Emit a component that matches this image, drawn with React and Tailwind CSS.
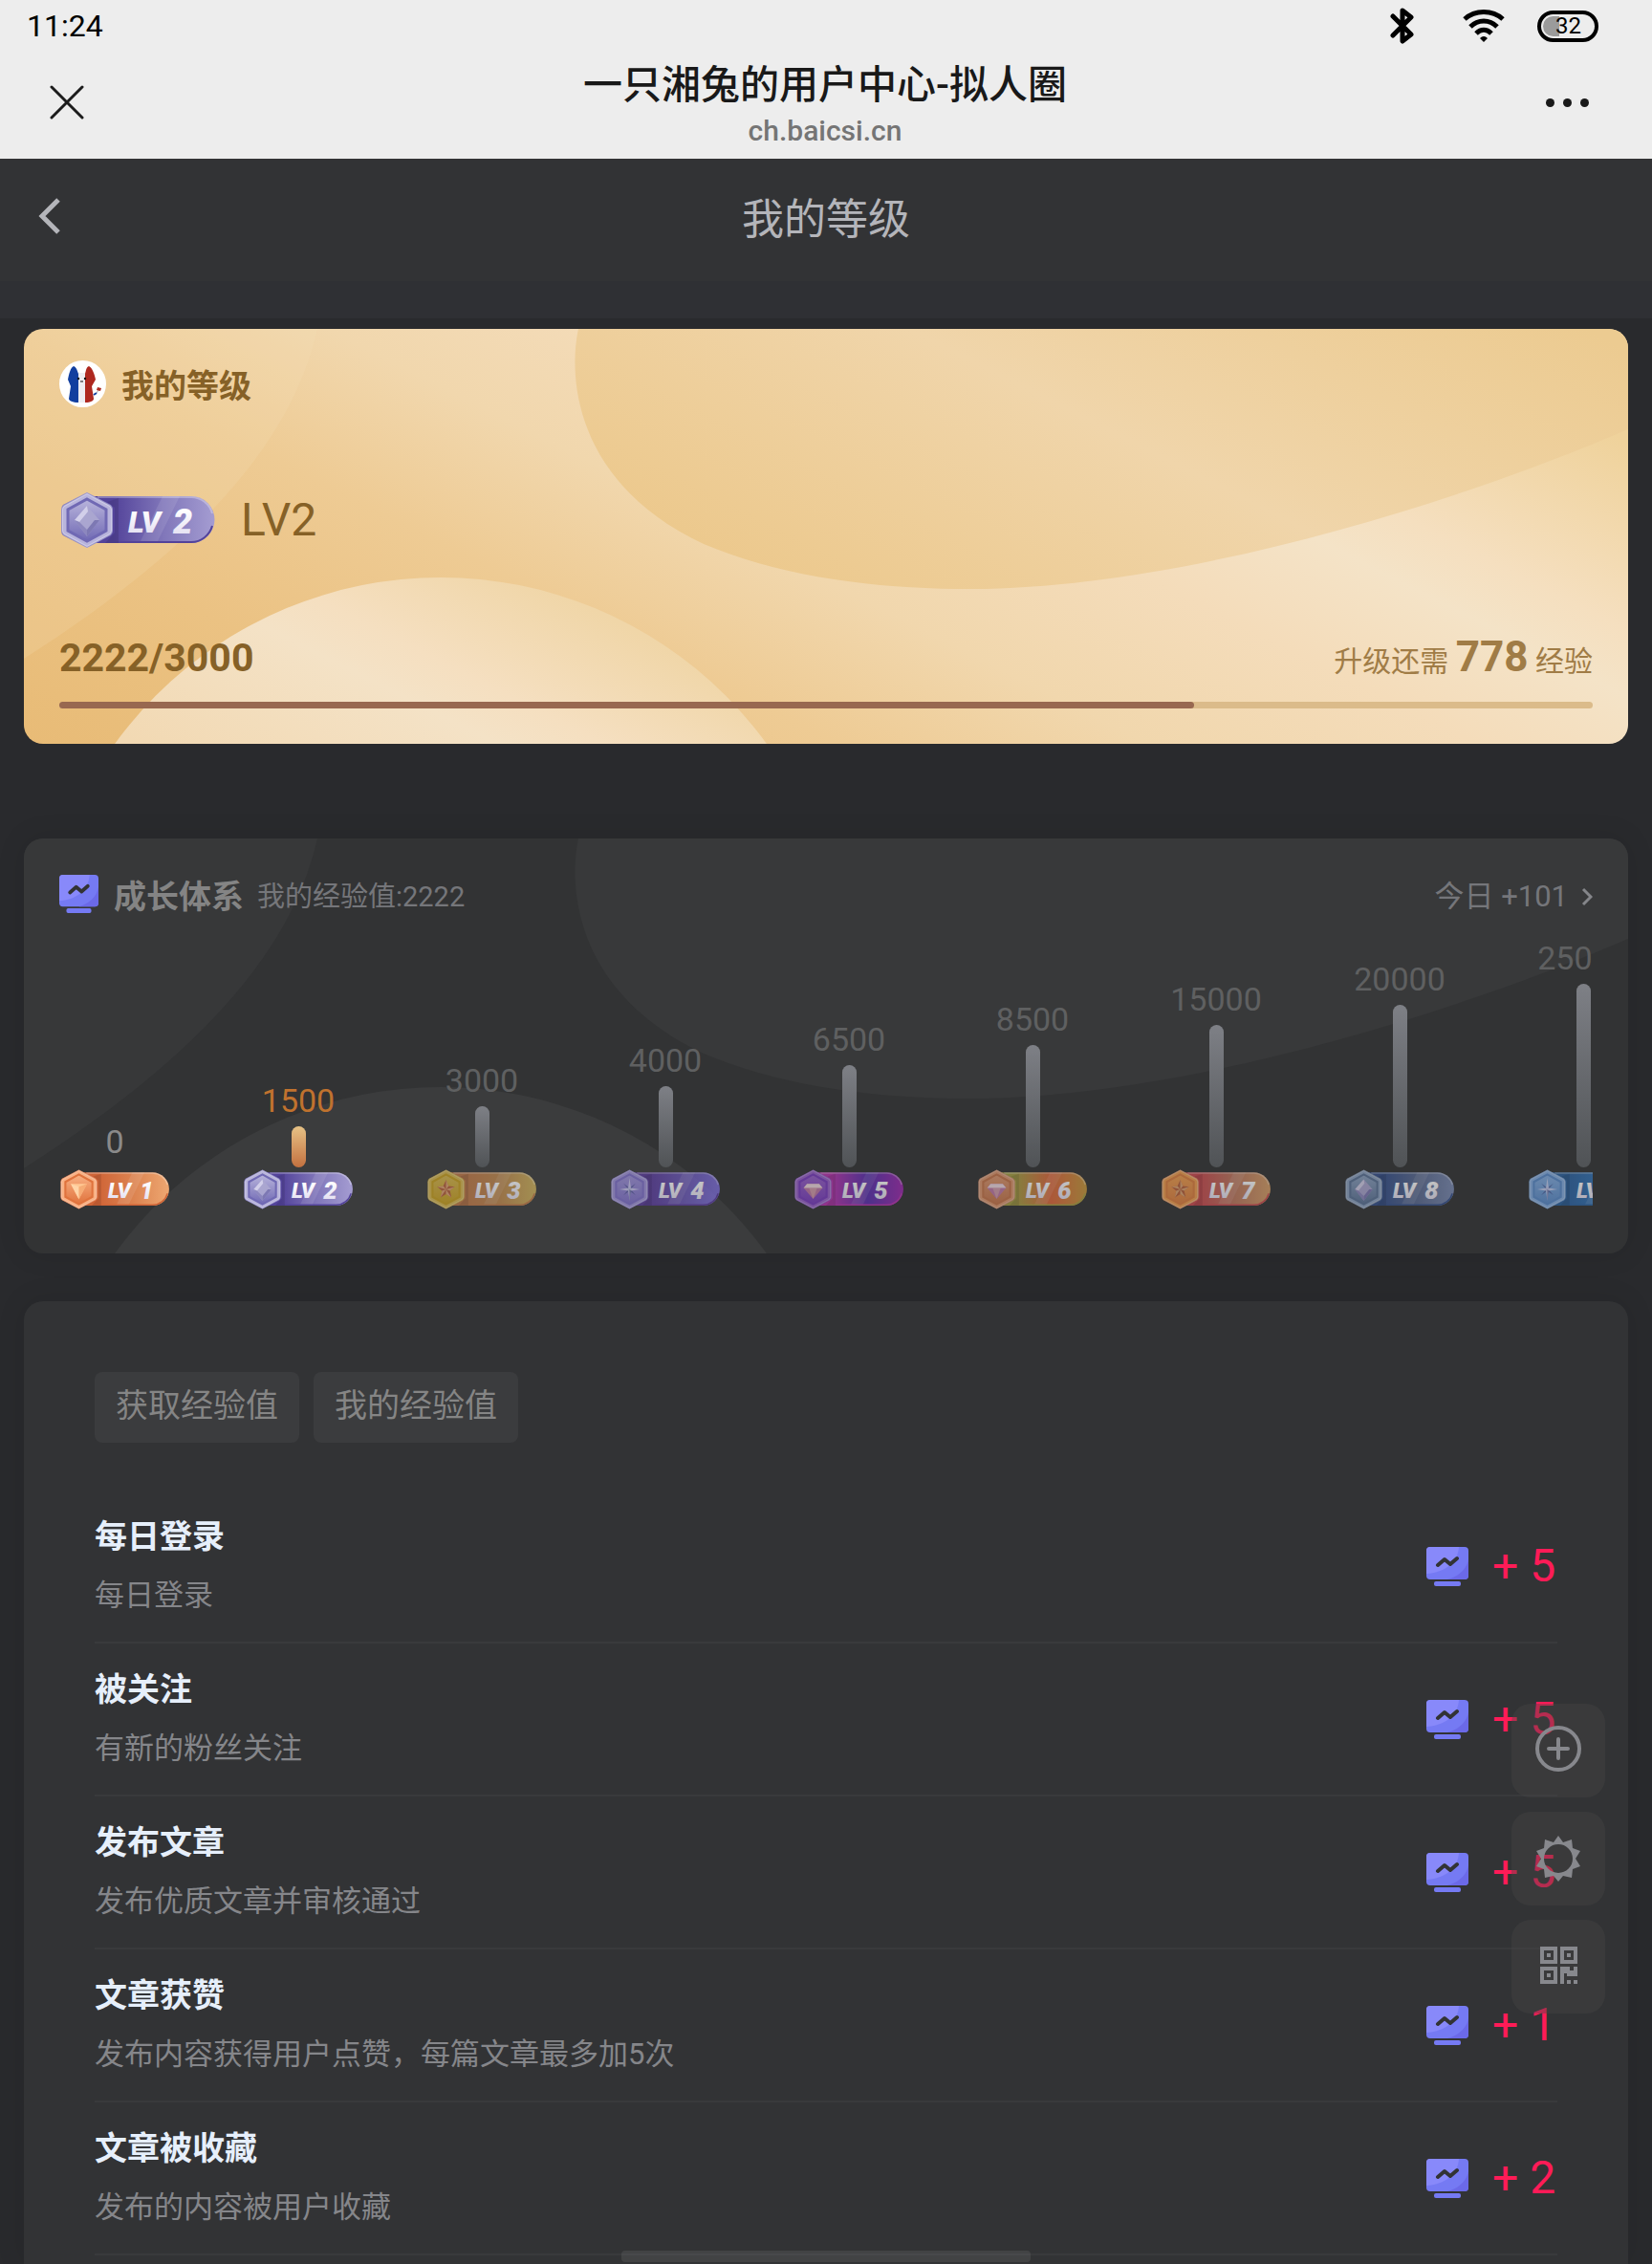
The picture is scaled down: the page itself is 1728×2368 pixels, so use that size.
import { useId } from 'react';
import clsx from 'clsx';

const levels = [
  { lv: 1, exp: '0', bar: 0, mark: 'triangle', hex: ['#f9b184', '#e0733d'], pill: ['#cf6437', '#dc8350', '#eea872'] },
  { lv: 2, exp: '1500', bar: 43, mark: 'diamond', hex: ['#b9b5dc', '#7069b4'], pill: ['#53439a', '#8177ba', '#a59dd2'] },
  { lv: 3, exp: '3000', bar: 64, mark: 'star', hex: ['#d8b850', '#c9a01f'], pill: ['#c07848', '#c08a4e', '#d0b45c'] },
  { lv: 4, exp: '4000', bar: 85, mark: 'compass', hex: ['#a094dc', '#7f70cc'], pill: ['#5a3b9c', '#6b58b8', '#7f70dc'] },
  { lv: 5, exp: '6500', bar: 107, mark: 'gem', hex: ['#9a62cc', '#7a3cc0'], pill: ['#b835b0', '#5a30b0', '#a02ab0'] },
  { lv: 6, exp: '8500', bar: 128, mark: 'gem', hex: ['#e09a72', '#c8764c'], pill: ['#a8a044', '#e0683c', '#c89a3c'] },
  { lv: 7, exp: '15000', bar: 149, mark: 'star', hex: ['#f2a050', '#e08040'], pill: ['#cc4a50', '#c07a60', '#d8a068'] },
  { lv: 8, exp: '20000', bar: 170, mark: 'diamond', hex: ['#8ea4c4', '#5c7498'], pill: ['#35508c', '#5c6c94', '#7c8cb4'] },
  { lv: 9, exp: '25000', bar: 192, mark: 'compass', hex: ['#86b0e4', '#5a8ccc'], pill: ['#2c62a0', '#3478bc', '#60a0dc'] },
];

const currentLevel = 2;

const tasks = [
  { title: '每日登录', desc: '每日登录', exp: 5 },
  { title: '被关注', desc: '有新的粉丝关注', exp: 5 },
  { title: '发布文章', desc: '发布优质文章并审核通过', exp: 5 },
  { title: '文章获赞', desc: '发布内容获得用户点赞，每篇文章最多加5次', exp: 1 },
  { title: '文章被收藏', desc: '发布的内容被用户收藏', exp: 2 },
];

function BadgeMark({ type }) {
  if (type === 'triangle') {
    return (
      <>
        <path d="M17 23H41L29 46Z" fill="#ffc894" />
        <path d="M17 23L29 27V46Z" fill="#ffdcb4" opacity=".6" />
        <path d="M41 23L29 27V46Z" fill="#f09a60" opacity=".6" />
      </>
    );
  }
  if (type === 'star') {
    return (
      <>
        <path d="M29 17L33 26L42 27L35 33L37 43L29 38L21 43L23 33L16 27L25 26Z" fill="#b8603c" />
        <path d="M29 17L33 26L29 31ZM42 27L35 33L29 31ZM37 43L29 38V31ZM21 43L23 33L29 31ZM16 27L25 26L29 31Z" fill="#f0c088" opacity=".7" />
      </>
    );
  }
  if (type === 'compass') {
    return (
      <>
        <path d="M20 22L29 29L38 22L31 31L38 40L29 33L20 40L27 31Z" fill="#3c4888" opacity=".6" />
        <path d="M29 14L31 29L44 31L31 33L29 48L27 33L14 31L27 29Z" fill="#dcdcf8" opacity=".75" />
        <path d="M29 31L31 33L29 48Z" fill="#3c4888" opacity=".7" />
      </>
    );
  }
  if (type === 'gem') {
    return (
      <>
        <path d="M20 23H38L43 29L29 45L15 29Z" fill="#c07aa8" />
        <path d="M20 23H38L43 29H15Z" fill="#f0d8e0" />
        <path d="M23 29H35L29 45Z" fill="#e8bcb0" opacity=".5" />
      </>
    );
  }
  return (
    <>
      <path d="M29 16L42 31L29 48L16 31Z" fill="#aaa6d0" />
      <path d="M29 16L16 31L21 33L30 22Z" fill="#dcdaf0" opacity=".8" />
      <path d="M42 31L29 48V41L37 31Z" fill="#6a65a6" opacity=".7" />
      <path d="M16 31L29 48V41L21 33Z" fill="#7f7ab6" opacity=".7" />
    </>
  );
}

function LevelBadge({ level, className }) {
  const id = useId();
  const { lv, mark, hex, pill } = level;
  return (
    <svg viewBox="0 0 164 62" className={className} role="img" aria-label={`LV ${lv}`}>
      <defs>
        <linearGradient id={`${id}p`} x1="30" x2="163" gradientUnits="userSpaceOnUse">
          <stop offset=".2" stopColor={pill[0]} />
          <stop offset=".6" stopColor={pill[1]} />
          <stop offset="1" stopColor={pill[2]} />
        </linearGradient>
        <linearGradient id={`${id}h`} x1="0" y1="0" x2="0" y2="1">
          <stop offset="0" stopColor={hex[0]} />
          <stop offset="1" stopColor={hex[1]} />
        </linearGradient>
        <linearGradient id={`${id}t`} x1="0" y1="0" x2="0" y2="1">
          <stop offset=".2" stopColor="#ffffff" />
          <stop offset="1" stopColor="#ddd8ee" />
        </linearGradient>
      </defs>
      <path d="M30 6H138A24 24 0 0 1 138 55H30Z" fill={`url(#${id}p)`} />
      <path d="M84 55L108 6H126L102 55Z" fill="#fff" opacity=".1" />
      <path d="M40 7H138A23 23 0 0 1 160 24" fill="none" stroke="#fff" strokeWidth="2" opacity=".3" />
      <path d="M40 54H138A23 23 0 0 0 160 37" fill="none" stroke={pill[0]} strokeWidth="2" />
      <path d="M50 12L58 18V44L48 55H62V8Z" fill="#000" opacity=".1" />
      <path d="M29 2L54 15Q56 17 56 20V42Q56 45 54 47L29 60L4 47Q2 45 2 42V20Q2 17 4 15Z" fill={hex[1]} />
      <path d="M29 3L53 16Q55 18 55 20V42Q55 44 53 46L29 59L5 46Q3 44 3 42V20Q3 18 5 16Z" fill={hex[0]} stroke="#fff" strokeOpacity=".3" strokeWidth="2" />
      <path d="M29 9L49 20V42L29 53L9 42V20Z" fill={`url(#${id}h)`} stroke={hex[1]} strokeWidth="3" />
      <BadgeMark type={mark} />
      <text x="72" y="44" fontSize="32" fontWeight="900" fontStyle="italic" fill={`url(#${id}t)`}>LV</text>
      <text x="119" y="45" fontSize="36" fontWeight="900" fontStyle="italic" fill={`url(#${id}t)`}>{lv}</text>
    </svg>
  );
}

function ExpIcon({ className }) {
  return (
    <svg viewBox="0 0 44 41" className={className} preserveAspectRatio="none" aria-hidden="true">
      <rect width="44" height="34" rx="4" fill="#757af3" />
      <path d="M4 0H34C33 17 18 27 0 28V4Q0 0 4 0Z" fill="#8889fa" />
      <path d="M44 13V30Q44 34 40 34H22C33 31 42 24 44 13Z" fill="#6b69e8" />
      <path d="M12 19L19 13L25 18L32 12" fill="none" stroke="#323335" strokeWidth="4" strokeLinecap="round" strokeLinejoin="round" />
      <rect x="8" y="36" width="28" height="5" rx="2" fill="#757af3" />
    </svg>
  );
}

function Avatar() {
  return (
    <svg viewBox="0 0 49 49" className="size-[49px]" role="img" aria-label="头像">
      <circle cx="24.5" cy="24.5" r="24.5" fill="#fff" />
      <path d="M20 44C14 44 10 42 10 40L12 27L9 20C10 14 12 7 15 6C18 7 19 11 20 14Z" fill="#123f9f" />
      <path d="M20 13H27V44H20Z" fill="#eeeef2" />
      <path d="M27 44C33 44 36 42 36 40L34 27L38 20C37 14 34 7 31 6C28 7 28 11 27 14Z" fill="#ae281f" />
      <path d="M36 36L39 34" stroke="#123f9f" strokeWidth="2" />
      <path d="M39 34L41 31" stroke="#aaa" strokeWidth="1" />
      <path d="M39 31L40 28L44 29L43 32Z" fill="#ae281f" />
      <circle cx="20" cy="19" r="1.2" fill="#111" />
      <circle cx="27" cy="19" r="1.2" fill="#111" />
      <path d="M22 22H25" stroke="#111" strokeWidth="1" />
    </svg>
  );
}

function Waves({ gold }) {
  return (
    <svg viewBox="0 0 1678 434" preserveAspectRatio="none" className="absolute inset-0 h-full w-full" aria-hidden="true">
      {gold && (
        <>
          <defs>
            <linearGradient id="base" gradientUnits="userSpaceOnUse" x1="0" y1="434" x2="469" y2="-494">
              <stop offset="0" stopColor="#e8bb76" />
              <stop offset=".2" stopColor="#ebc283" />
              <stop offset=".37" stopColor="#eecb94" />
              <stop offset=".51" stopColor="#f1d7ad" />
              <stop offset=".66" stopColor="#f4dcba" />
              <stop offset=".77" stopColor="#f4e3c7" />
              <stop offset=".83" stopColor="#f5dfbf" />
              <stop offset="1" stopColor="#efd29b" />
            </linearGradient>
            <linearGradient id="blob" gradientUnits="userSpaceOnUse" x1="219" y1="1" x2="508" y2="-570">
              <stop offset="0" stopColor="#ecc88b" />
              <stop offset=".5" stopColor="#f0d5aa" />
              <stop offset="1" stopColor="#eccb91" />
            </linearGradient>
            <linearGradient id="hill" gradientUnits="userSpaceOnUse" x1="0" y1="374" x2="153" y2="71">
              <stop offset="0" stopColor="#f2d9b3" />
              <stop offset=".5" stopColor="#f4e2c6" />
              <stop offset=".65" stopColor="#f5dfc0" />
              <stop offset="1" stopColor="#f0d6a8" />
            </linearGradient>
          </defs>
          <rect width="1678" height="434" fill="url(#base)" />
        </>
      )}
      <path d="M0 0H307C280 120 180 230 0 345Z" fill={gold ? '#f4e0b8' : '#373839'} opacity={gold ? 0.2 : 1} />
      <path d="M580 0C570 45 572 160 711 225C800 262 900 272 989 272C1200 272 1480 190 1678 105V0Z" fill={gold ? 'url(#blob)' : '#38393a'} />
      <circle cx="436" cy="681" r="421" fill={gold ? 'url(#hill)' : '#3b3c3d'} />
    </svg>
  );
}

function BrowserBar() {
  return (
    <header className="bg-[#ededed] text-black">
      <div className="flex h-[54px] items-center justify-between pr-14 pl-7">
        <span className="text-[32px] leading-10">11:24</span>
        <div className="flex items-center">
          <svg viewBox="0 0 26 40" className="mr-[50px] h-10 w-[26px]" fill="none" stroke="#000" strokeWidth="5" strokeLinejoin="round" strokeLinecap="round" aria-hidden="true">
            <path d="M3 10L22 29L13 36V4L22 11L3 30" />
          </svg>
          <svg viewBox="0 0 44 34" className="mr-[34px] h-[34px] w-11" fill="none" stroke="#000" strokeWidth="5" aria-hidden="true">
            <path d="M2 10C13 0 31 0 42 10" />
            <path d="M8 18C16 10 28 10 36 18" />
            <path d="M14 25C19 20 25 20 30 25" />
            <path d="M18 30Q22 26 26 30L22 34Z" fill="#000" stroke="none" />
          </svg>
          <div className="flex h-[33px] w-16 items-center rounded-full border-4 border-black p-0.5">
            <div className="-mr-2 h-[21px] w-[17px] rounded-l-full bg-[#9b9b9b]" />
            <span className="relative pl-1 text-2xl leading-6">32</span>
          </div>
        </div>
      </div>
      <div className="grid h-28 grid-cols-[1fr_auto_1fr] items-center pr-[66px] pl-[52px]">
        <button type="button" aria-label="关闭" className="justify-self-start pb-1.5">
          <svg viewBox="0 0 36 36" className="size-9" fill="none" stroke="#1c1c1c" strokeWidth="3" strokeLinecap="round">
            <path d="M2 2L34 34M34 2L2 34" />
          </svg>
        </button>
        <div className="ml-3 flex flex-col items-center gap-1 pt-0.5">
          <h1 className="text-[41px] leading-[48px] font-medium text-[#191919]">一只湘兔的用户中心-拟人圈</h1>
          <p className="text-[30px] leading-10 font-medium text-[#757575]">ch.baicsi.cn</p>
        </div>
        <button type="button" aria-label="更多" className="flex gap-[9px] justify-self-end pb-1.5">
          <span className="size-[9px] rounded-full bg-[#191919]" />
          <span className="size-[9px] rounded-full bg-[#191919]" />
          <span className="size-[9px] rounded-full bg-[#191919]" />
        </button>
      </div>
    </header>
  );
}

function PageNav() {
  return (
    <nav className="border-b-[39px] border-[#2f3034] bg-[#323335]">
      <div className="grid h-32 grid-cols-[1fr_auto_1fr] items-center px-10">
        <a href="#back" aria-label="返回" className="justify-self-start pb-2">
          <svg viewBox="0 0 24 38" className="h-[38px] w-6" fill="none" stroke="#b4b5ba" strokeWidth="5">
            <path d="M21 2L4 19L21 36" />
          </svg>
        </a>
        <h2 className="text-[44px] leading-[52px] text-[#b4b5ba]">我的等级</h2>
      </div>
    </nav>
  );
}

function LevelCard() {
  return (
    <section className="relative overflow-hidden rounded-[20px] text-[#866127]">
      <Waves gold />
      <div className="relative px-[37px] pt-[33px] pb-[37px]">
        <div className="flex items-center gap-4">
          <Avatar />
          <h3 className="pt-1 text-[34px] leading-[44px] font-bold">我的等级</h3>
        </div>
        <div className="mt-[87px] flex items-center gap-[26px]">
          <LevelBadge level={levels[1]} className="h-[62px] w-[164px]" />
          <span className="text-5xl leading-[60px]">LV2</span>
        </div>
        <div className="mt-[82px] flex items-baseline justify-between">
          <span className="text-[41px] leading-[60px] font-bold">2222/3000</span>
          <span className="text-[30px] leading-[60px] text-[#a07c46]">
            升级还需 <b className="text-[44px]">778</b> 经验
          </span>
        </div>
        <div className="mt-3 h-[7px] rounded-full bg-[#dbbb8a]">
          <div className="h-full w-[74%] rounded-full bg-[#986850]" />
        </div>
      </div>
    </section>
  );
}

function GrowthCard() {
  return (
    <section className="relative mt-[99px] overflow-hidden rounded-[20px] bg-[#323334] shadow-[0_0_30px_rgba(0,0,0,0.1)]">
      <Waves />
      <div className="relative px-[37px] pt-[37px] pb-[45px]">
        <div className="flex items-center justify-between">
          <div className="flex items-center">
            <ExpIcon className="mb-1.5 h-10 w-[41px]" />
            <h3 className="ml-4 text-[34px] leading-[48px] font-bold text-[#848484]">成长体系</h3>
            <span className="ml-3.5 text-[29px] leading-[48px] text-[#75767a]">我的经验值:2222</span>
          </div>
          <a href="#today" className="flex items-center gap-3.5 text-[31px] leading-[48px] text-[#75767a]">
            今日 +101
            <svg viewBox="0 0 12 20" className="h-5 w-3" fill="none" stroke="#85868a" strokeWidth="3">
              <path d="M2 2L10 10L2 18" />
            </svg>
          </a>
        </div>
        <ol className="mt-5 flex items-end gap-[76px] overflow-hidden">
          {levels.map((level) => (
            <li key={level.lv} className="flex w-[116px] shrink-0 flex-col items-center">
              <span
                className={clsx(
                  'text-[34px] leading-10',
                  level.lv < currentLevel && 'text-[#8a8a8a]',
                  level.lv === currentLevel && 'text-[#c0722e]',
                  level.lv > currentLevel && 'text-[#5f6061]',
                )}
              >
                {level.exp}
              </span>
              <div
                className={clsx(
                  'mt-[7px] w-[15px] rounded-full bg-linear-to-b',
                  level.lv === currentLevel ? 'from-[#e6c286] to-[#c2703f]' : 'from-[#7e8086] to-[#505356]',
                )}
                style={{ height: level.bar }}
              />
              <LevelBadge level={level} className={clsx('mt-px h-11 w-[116px]', level.lv > currentLevel && 'opacity-70')} />
            </li>
          ))}
        </ol>
      </div>
    </section>
  );
}

function TaskCard() {
  return (
    <section className="mt-[50px] flex-1 rounded-t-[20px] bg-[#323335] px-[74px] pt-[74px] shadow-[0_0_30px_rgba(0,0,0,0.1)]">
      <div className="flex gap-[15px]">
        {['获取经验值', '我的经验值'].map((tab) => (
          <button key={tab} type="button" className="h-[74px] rounded-lg bg-[#3b3c3e] px-[22px] pb-1 text-[34px] leading-[48px] text-[#858585]">
            {tab}
          </button>
        ))}
      </div>
      <ul className="mt-[50px]">
        {tasks.map((task) => (
          <li key={task.title} className="flex h-40 items-center justify-between border-b-2 border-[#393a3c]">
            <div className="flex flex-col gap-3.5">
              <h4 className="text-[34px] leading-[48px] font-bold text-[#e6effb]">{task.title}</h4>
              <p className="text-[31px] leading-[48px] text-[#85868a]">{task.desc}</p>
            </div>
            <div className="flex items-center gap-[25px]">
              <ExpIcon className="h-[41px] w-11" />
              <span className="w-[68px] text-5xl leading-[56px] whitespace-nowrap text-[#ff1b57]">+ {task.exp}</span>
            </div>
          </li>
        ))}
      </ul>
    </section>
  );
}

function FloatingTools() {
  const button = 'flex size-[98px] items-center justify-center rounded-[20px] bg-[#454647]/40';
  return (
    <div className="fixed right-[49px] bottom-[262px] flex flex-col gap-[15px] text-[#87888d]">
      <button type="button" aria-label="发布" className={button}>
        <svg viewBox="0 0 48 48" className="mb-1 size-12" fill="none" stroke="currentColor" strokeWidth="4">
          <circle cx="24" cy="24" r="22" />
          <path d="M24 14V34M14 24H34" strokeLinecap="round" />
        </svg>
      </button>
      <button type="button" aria-label="切换主题" className={button}>
        <svg viewBox="0 0 48 48" className="size-12" fill="currentColor" fillRule="evenodd">
          <path d="M24 0L29 7L38 4L39 13L47 16L42 24L47 32L39 35L38 44L29 42L24 48L19 42L10 44L9 35L1 32L6 24L1 16L9 13L10 4L19 7ZM24 9A15 15 0 1 0 24 39A15 15 0 1 0 24 9Z" />
        </svg>
      </button>
      <button type="button" aria-label="二维码" className={button}>
        <svg viewBox="0 0 39 39" className="mb-1 size-[39px]" fill="currentColor" fillRule="evenodd">
          <path d="M0 0H18V18H0ZM4 4V14H14V4ZM7 7H11V11H7Z" />
          <path d="M21 0H39V18H21ZM25 4V14H35V4ZM28 7H32V11H28Z" />
          <path d="M0 21H18V39H0ZM4 25V35H14V25ZM7 28H11V32H7Z" />
          <path d="M21 21H31V25H35V21H39V31H28V28H25V39H21ZM28 35H32V39H28ZM35 35H39V39H35Z" />
        </svg>
      </button>
    </div>
  );
}

export default function App() {
  return (
    <div className="flex min-h-screen flex-col bg-[#292a2d] font-['Roboto','Noto_Sans_CJK_SC',sans-serif]">
      <BrowserBar />
      <PageNav />
      <main className="flex flex-1 flex-col px-[25px] pt-[11px]">
        <LevelCard />
        <GrowthCard />
        <TaskCard />
      </main>
      <FloatingTools />
      <div className="fixed bottom-0.5 left-1/2 h-3 w-[428px] -translate-x-1/2 rounded-sm bg-white/8" />
    </div>
  );
}
